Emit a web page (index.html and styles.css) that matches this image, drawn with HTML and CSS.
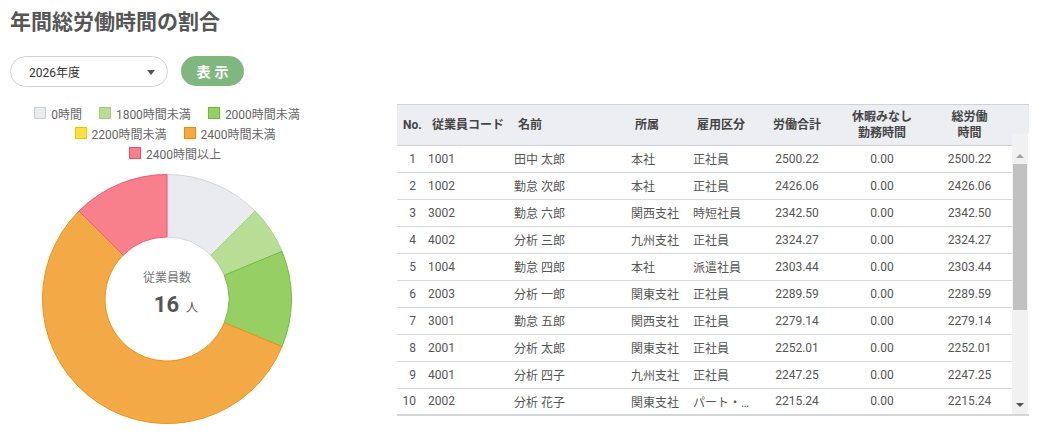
FILE: index.html
```html
<!DOCTYPE html>
<html lang="ja">
<head>
<meta charset="utf-8">
<title>年間総労働時間の割合</title>
<link rel="stylesheet" href="styles.css">
</head>
<body>
<h1 class="title">年間総労働時間の割合</h1>
<div class="controls">
  <div class="select"><span class="select-text">2026年度</span><span class="caret"></span></div>
  <button class="btn">表示</button>
</div>
<div class="main">
  <div class="chart-col">
    <div class="legend">
      <div class="legend-row">
        <span class="li"><i class="box c0"></i>0時間</span>
        <span class="li"><i class="box c1"></i>1800時間未満</span>
        <span class="li"><i class="box c2"></i>2000時間未満</span>
      </div>
      <div class="legend-row shift">
        <span class="li"><i class="box c3"></i>2200時間未満</span>
        <span class="li"><i class="box c4"></i>2400時間未満</span>
      </div>
      <div class="legend-row shift">
        <span class="li"><i class="box c5"></i>2400時間以上</span>
      </div>
    </div>
    <div class="donut">
      <svg width="252" height="252" viewBox="0 0 252 252">
        <path class="s0" d="M126 1.5 A124.5 124.5 0 0 1 214.03 37.97 L169.84 82.16 A62 62 0 0 0 126 64 Z"/>
        <path class="s1" d="M214.03 37.97 A124.5 124.5 0 0 1 241.02 78.36 L183.28 102.27 A62 62 0 0 0 169.84 82.16 Z"/>
        <path class="s2" d="M241.02 78.36 A124.5 124.5 0 0 1 241.02 173.64 L183.28 149.73 A62 62 0 0 0 183.28 102.27 Z"/>
        <path class="s4" d="M241.02 173.64 A124.5 124.5 0 1 1 37.97 37.97 L82.16 82.16 A62 62 0 1 0 183.28 149.73 Z"/>
        <path class="s5" d="M37.97 37.97 A124.5 124.5 0 0 1 126 1.5 L126 64 A62 62 0 0 0 82.16 82.16 Z"/>
      </svg>
      <div class="donut-center">
        <div class="dc-label">従業員数</div>
        <div class="dc-value"><span class="dc-num">16</span><span class="dc-unit">人</span></div>
      </div>
    </div>
  </div>
  <div class="table-box">
    <div class="table-main">
      <table class="grid">
        <colgroup>
          <col style="width:27px"><col style="width:86px"><col style="width:117px"><col style="width:62px">
          <col style="width:68px"><col style="width:80px"><col style="width:90px"><col style="width:85px">
        </colgroup>
        <thead>
          <tr>
            <th class="th-no">No.</th>
            <th>従業員コード</th>
            <th>名前</th>
            <th>所属</th>
            <th>雇用区分</th>
            <th class="ctr">労働合計</th>
            <th class="ctr">休暇みなし<br>勤務時間</th>
            <th class="ctr">総労働<br>時間</th>
          </tr>
        </thead>
        <tbody>
          <tr><td class="no">1</td><td>1001</td><td>田中 太郎</td><td>本社</td><td>正社員</td><td class="ctr">2500.22</td><td class="ctr">0.00</td><td class="ctr">2500.22</td></tr>
          <tr><td class="no">2</td><td>1002</td><td>勤怠 次郎</td><td>本社</td><td>正社員</td><td class="ctr">2426.06</td><td class="ctr">0.00</td><td class="ctr">2426.06</td></tr>
          <tr><td class="no">3</td><td>3002</td><td>勤怠 六郎</td><td>関西支社</td><td>時短社員</td><td class="ctr">2342.50</td><td class="ctr">0.00</td><td class="ctr">2342.50</td></tr>
          <tr><td class="no">4</td><td>4002</td><td>分析 三郎</td><td>九州支社</td><td>正社員</td><td class="ctr">2324.27</td><td class="ctr">0.00</td><td class="ctr">2324.27</td></tr>
          <tr><td class="no">5</td><td>1004</td><td>勤怠 四郎</td><td>本社</td><td>派遣社員</td><td class="ctr">2303.44</td><td class="ctr">0.00</td><td class="ctr">2303.44</td></tr>
          <tr><td class="no">6</td><td>2003</td><td>分析 一郎</td><td>関東支社</td><td>正社員</td><td class="ctr">2289.59</td><td class="ctr">0.00</td><td class="ctr">2289.59</td></tr>
          <tr><td class="no">7</td><td>3001</td><td>勤怠 五郎</td><td>関西支社</td><td>正社員</td><td class="ctr">2279.14</td><td class="ctr">0.00</td><td class="ctr">2279.14</td></tr>
          <tr><td class="no">8</td><td>2001</td><td>分析 太郎</td><td>関東支社</td><td>正社員</td><td class="ctr">2252.01</td><td class="ctr">0.00</td><td class="ctr">2252.01</td></tr>
          <tr><td class="no">9</td><td>4001</td><td>分析 四子</td><td>九州支社</td><td>正社員</td><td class="ctr">2247.25</td><td class="ctr">0.00</td><td class="ctr">2247.25</td></tr>
          <tr class="last"><td class="no">10</td><td>2002</td><td>分析 花子</td><td>関東支社</td><td>パート・…</td><td class="ctr">2215.24</td><td class="ctr">0.00</td><td class="ctr">2215.24</td></tr>
        </tbody>
      </table>
    </div>
    <div class="vscroll">
      <div class="vs-head"></div>
      <div class="vs-track">
        <div class="vs-up"><i class="arr-up"></i></div>
        <div class="vs-thumb"></div>
        <div class="vs-fill"></div>
        <div class="vs-down"><i class="arr-down"></i></div>
      </div>
    </div>
  </div>
</div>
</body>
</html>
```
FILE: styles.css
```css
* { box-sizing: border-box; }
html, body { margin: 0; padding: 0; background: #fff; }
body {
  font-family: Roboto, "Noto Sans CJK JP", sans-serif;
  color: #555;
  padding: 0 10px;
  width: 1042px;
  height: 447px;
  overflow: hidden;
}
.title {
  margin: 0;
  padding-top: 8px;
  font-size: 21px;
  line-height: 24px;
  font-weight: 700;
  color: #555;
  font-family: "Noto Sans CJK JP", sans-serif;
}
.controls {
  margin-top: 24px;
  display: flex;
  align-items: flex-start;
  gap: 13px;
}
.select {
  width: 158px;
  height: 31px;
  border: 1px solid #cfd3d8;
  border-radius: 16px;
  display: flex;
  align-items: center;
  justify-content: space-between;
  padding: 0 12px 0 18px;
  font-size: 12px;
  color: #333;
}
.caret {
  width: 0; height: 0;
  border-left: 4px solid transparent;
  border-right: 4px solid transparent;
  border-top: 5px solid #555;
  margin-top: 1px;
}
.btn {
  width: 63px;
  height: 30px;
  border: none;
  border-radius: 15px;
  background: #7fb77e;
  color: #fff;
  font-family: "Noto Sans CJK JP", sans-serif;
  font-size: 14px;
  font-weight: 700;
  letter-spacing: 4px;
  padding: 0 0 0 4px;
  line-height: 30px;
}
.main {
  margin-top: 17px;
  display: flex;
  align-items: flex-start;
  gap: 73px;
}
.chart-col {
  width: 314px;
  display: flex;
  flex-direction: column;
  align-items: center;
}
.legend { margin-top: -1px; width: 100%; }
.legend-row {
  height: 20px;
  display: flex;
  justify-content: center;
  align-items: center;
  gap: 17px;
  font-size: 12px;
  color: #666;
}
.legend-row.shift { padding-left: 16px; }
.li { display: flex; align-items: center; gap: 5px; white-space: nowrap; }
.box { display: block; width: 12px; height: 12px; border: 1px solid; }
.c0 { background: #e9ebef; border-color: #c9ced6; }
.c1 { background: #b7de94; border-color: #9fd276; }
.c2 { background: #96cf64; border-color: #6cb83a; }
.c3 { background: #ffe040; border-color: #f5c400; }
.c4 { background: #f4a947; border-color: #ee8a00; }
.c5 { background: #f87f8c; border-color: #ef4f66; }
.donut {
  position: relative;
  width: 252px;
  height: 252px;
  margin-top: 10px;
}
.donut svg { display: block; }
.s0 { fill: #e9ebef; stroke: #d3d7dd; stroke-width: 1; }
.s1 { fill: #b7de94; stroke: #a6d680; stroke-width: 1; }
.s2 { fill: #96cf64; stroke: #74bd3c; stroke-width: 1; }
.s4 { fill: #f4a947; stroke: #f0930f; stroke-width: 1; }
.s5 { fill: #f87f8c; stroke: #f05a6e; stroke-width: 1; }
.donut-center {
  position: absolute;
  left: 0; right: 0; top: 96px;
  text-align: center;
}
.dc-label { font-size: 12px; line-height: 18px; color: #777; }
.dc-value {
  margin-top: 5px;
  display: flex;
  justify-content: center;
  align-items: baseline;
  padding-left: 18px;
  gap: 7px;
  color: #555;
}
.dc-num { font-size: 22px; font-weight: 700; line-height: 26px; }
.dc-unit { font-size: 12px; }
.table-box {
  width: 632px;
  display: flex;
  border-top: 1px solid #cfd3d9;
  border-bottom: 2px solid #d3d5d8;
}
.table-main { width: 615px; }
.grid {
  width: 615px;
  table-layout: fixed;
  border-collapse: collapse;
  font-size: 12px;
}
.grid th {
  height: 40px;
  background: #eceef1;
  color: #444;
  font-weight: 700;
  text-align: left;
  padding: 0 0 0 8px;
  line-height: 16px;
  border-bottom: 1px solid #cdd1d7;
  white-space: nowrap;
}
.grid th.th-no { padding-left: 6px; }
.grid th.ctr { text-align: center; padding: 0; }
.grid td {
  height: 27px;
  padding: 0 0 0 4px;
  border-bottom: 1px solid #d5d9de;
  color: #555;
  white-space: nowrap;
  overflow: hidden;
}
.grid tr.last td { border-bottom: none; height: 26px; }
.grid td.no { text-align: right; padding: 0 8px 0 0; }
.grid td.ctr { text-align: center; padding: 0; }
.vscroll {
  width: 17px;
  display: flex;
  flex-direction: column;
}
.vs-head { height: 29px; background: #eceef1; }
.vs-track {
  flex: 1;
  width: 16px;
  background: #f1f1f1;
  display: flex;
  flex-direction: column;
  align-items: center;
}
.vs-up {
  height: 30px;
  display: flex;
  align-items: flex-end;
  padding-bottom: 6px;
}
.arr-up {
  display: block;
  width: 0; height: 0;
  border-left: 4px solid transparent;
  border-right: 4px solid transparent;
  border-bottom: 4px solid #a3a3a3;
}
.vs-thumb { width: 14px; height: 146px; background: #c1c1c1; }
.vs-fill { flex: 1; }
.vs-down {
  height: 17px;
  display: flex;
  align-items: flex-end;
  padding-bottom: 7px;
}
.arr-down {
  display: block;
  width: 0; height: 0;
  border-left: 4px solid transparent;
  border-right: 4px solid transparent;
  border-top: 4px solid #505050;
}
```
